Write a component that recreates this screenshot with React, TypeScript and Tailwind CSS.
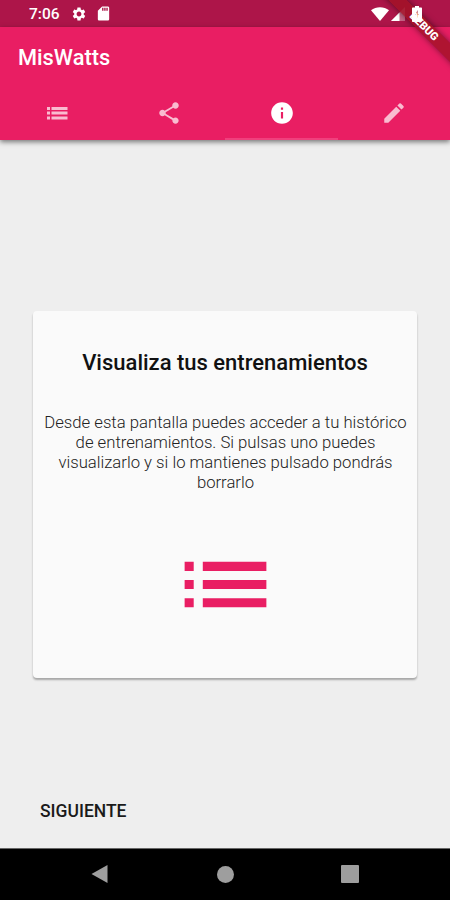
import React from 'react'
import { MdEdit, MdInfo, MdList, MdSdCard, MdSettings, MdShare } from 'react-icons/md'

interface IconProps {
  className?: string
}

function ListTabIcon({ className }: IconProps) {
  return (
    <svg className={className} viewBox="0 0 26 26" fill="currentColor">
      <path d="M3 7h3v3H3zM3 11.500h3v3H3zM3 16.500h3v3H3zM7.500 7H23.500v3H7.500zM7.500 11.500H23.500v3H7.500zM7.500 16.500H23.500v3H7.500z" />
    </svg>
  )
}

const tabs = [
  { id: 'list', icon: ListTabIcon, active: false },
  { id: 'share', icon: MdShare, active: false },
  { id: 'info', icon: MdInfo, active: true },
  { id: 'edit', icon: MdEdit, active: false },
]

function StatusBar() {
  return (
    <div className="flex h-[27px] items-center justify-between bg-[#ad1549] pl-[29px] pr-[28px] text-white">
      <div className="flex items-center">
        <span className="w-[42px] pt-[2px] text-[15.500px] font-medium leading-none">7:06</span>
        <MdSettings className="h-4 w-4" />
        <MdSdCard className="ml-[8px] h-[17px] w-[17px]" />
      </div>
      <div className="flex items-center">
        {/* Wifi */}
        <svg className="h-[14px] w-[18px]" viewBox="0 0 18 14" fill="currentColor">
          <path d="M9 14L0 3.2C5-.8 13-.8 18 3.2z" />
        </svg>
        {/* Signal */}
        <svg className="ml-[2px] h-[14px] w-[14px]" viewBox="0 0 14 14" fill="currentColor">
          <path d="M14 0v14H0z" opacity="0.35" />
          <path d="M8.5 5.5V14H0z" />
        </svg>
        {/* Battery */}
        <svg className="relative z-10 ml-[7px] h-[16px] w-[10px]" viewBox="0 0 10 16" fill="currentColor">
          <path
            fillRule="evenodd"
            d="M3 0h4v1.6h2c.6 0 1 .4 1 1V15c0 .6-.4 1-1 1H1c-.6 0-1-.4-1-1V2.600c0-.6.4-1 1-1h2zM5.500 4L3.500 9h1.300V12.500L6.500 8H5.500z"
          />
        </svg>
      </div>
    </div>
  )
}

function DebugBanner() {
  return (
    <div className="pointer-events-none absolute right-0 top-0 h-[76px] w-[76px] overflow-hidden">
      <div className="absolute left-[-2px] top-[20px] flex h-[13px] w-[104px] rotate-45 items-center justify-center bg-[#a01224]/80 text-[11px] font-black leading-none text-white shadow-[0_0_6px_rgba(0,0,0,0.5)]">
        DEBUG
      </div>
    </div>
  )
}

function NavigationBar() {
  return (
    <div className="flex h-[52px] items-center justify-between border-t border-[#666] bg-black pb-px pl-[91px] pr-[91px] text-[#9e9e9e]">
      <svg className="h-[18px] w-[17px]" viewBox="0 0 17 18" fill="currentColor">
        <path d="M16.500 0v18L.5 9z" />
      </svg>
      <div className="ml-px h-[17px] w-[17px] rounded-full bg-[#9e9e9e]" />
      <div className="h-[18px] w-[18px] rounded-[1px] bg-[#9e9e9e]" />
    </div>
  )
}

export default function App() {
  return (
    <div className="relative flex h-[900px] w-[450px] flex-col overflow-hidden bg-[#eeeeee] font-[Roboto,sans-serif] text-[#212121]">
      <StatusBar />

      {/* App bar */}
      <header className="flex h-[113px] flex-col bg-[#e91e63] shadow-[0_2px_5px_rgba(0,0,0,0.5)]">
        <h1 className="flex h-[61px] items-center pl-[18px] pt-[2px] text-[21.800px] font-medium text-white">MisWatts</h1>
        <nav className="grid flex-1 grid-cols-4">
          {tabs.map(({ id, icon: Icon, active }) => (
            <div
              key={id}
              className={
                active
                  ? 'flex items-center justify-center border-b-2 border-[#f0407d] pl-px text-white'
                  : 'flex items-center justify-center border-b-2 border-transparent pl-px text-white/70'
              }
            >
              <Icon className="h-[26px] w-[26px]" />
            </div>
          ))}
        </nav>
      </header>

      {/* Card */}
      <main className="flex-1 px-[33px] pt-[171px]">
        <section className="flex h-[367px] flex-col items-center rounded-[4px] bg-[#fafafa] shadow-[0_2px_2px_rgba(0,0,0,0.3)]">
          <h2 className="mt-[39px] whitespace-nowrap text-[22px] font-medium leading-[26px] text-[#111]">
            Visualiza tus entrenamientos
          </h2>
          <p className="mt-[37px] whitespace-nowrap pl-px text-center text-[16.700px] font-light leading-[20px] text-[#222]">
            Desde esta pantalla puedes acceder a tu histórico
            <br />
            de entrenamientos. Si pulsas uno puedes
            <br />
            visualizarlo y si lo mantienes pulsado pondrás
            <br />
            borrarlo
          </p>
          <MdList className="ml-px mt-[37px] h-[109px] w-[109px] text-[#e91e63]" />
        </section>
        <button className="ml-[7px] mt-[123px] text-[17.500px] font-medium leading-[20px] text-[#1a1a1a]">SIGUIENTE</button>
      </main>

      <NavigationBar />
      <DebugBanner />
    </div>
  )
}
